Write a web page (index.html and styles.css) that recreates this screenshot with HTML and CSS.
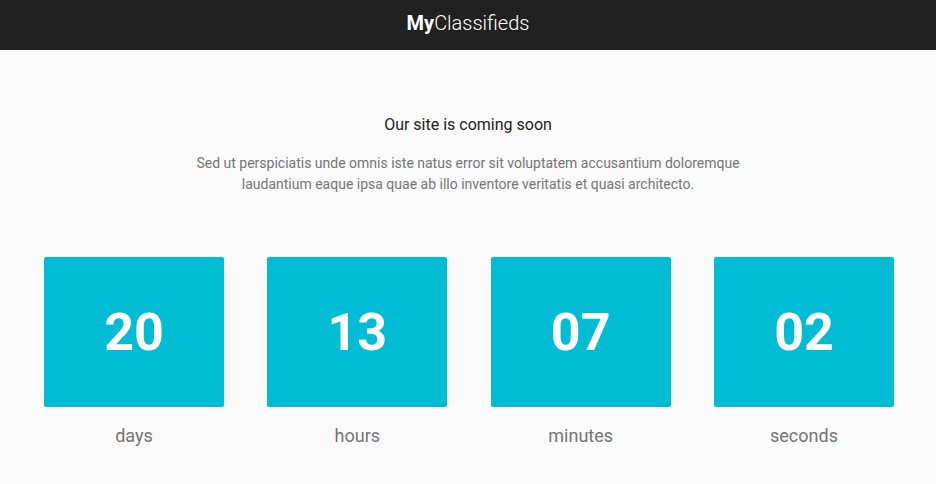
FILE: index.html
```html
<!DOCTYPE html>
<html lang="en">
<head>
<meta charset="utf-8">
<title>MyClassifieds</title>
<link rel="stylesheet" href="styles.css">
</head>
<body>
<header class="navbar">
  <div class="brand"><b>My</b>Classifieds</div>
</header>
<main class="main">
  <h1 class="title">Our site is coming soon</h1>
  <p class="lead">Sed ut perspiciatis unde omnis iste natus error sit voluptatem accusantium doloremque<br>laudantium eaque ipsa quae ab illo inventore veritatis et quasi architecto.</p>
  <div class="countdown">
    <div class="unit"><div class="box">20</div><div class="label">days</div></div>
    <div class="unit"><div class="box">13</div><div class="label">hours</div></div>
    <div class="unit"><div class="box">07</div><div class="label">minutes</div></div>
    <div class="unit"><div class="box">02</div><div class="label">seconds</div></div>
  </div>
</main>
</body>
</html>
```
FILE: styles.css
```css
* { box-sizing: border-box; }
html, body { margin: 0; padding: 0; }
body {
  background: #fafafa;
  font-family: Roboto, "Liberation Sans", sans-serif;
  color: #212121;
}
.navbar {
  height: 50px;
  background: #212121;
  display: flex;
  align-items: center;
  justify-content: center;
}
.brand {
  color: #fff;
  font-size: 20px;
  font-weight: 300;
  line-height: 24px;
  margin-top: -4px;
}
.brand b { font-weight: 700; }
.main {
  padding-top: 65px;
  text-align: center;
}
.title {
  margin: 0;
  font-size: 16px;
  font-weight: 400;
  line-height: 20px;
  color: #212121;
}
.lead {
  margin: 18px 0 0;
  font-size: 14px;
  line-height: 21px;
  color: #757575;
}
.countdown {
  display: grid;
  grid-template-columns: repeat(4, 180px);
  column-gap: 43.33px;
  justify-content: center;
  padding-left: 2px;
  margin-top: 62px;
}
.box {
  height: 150px;
  background: #00bcd4;
  border-radius: 2px;
  color: #fff;
  font-size: 52px;
  font-weight: 700;
  display: flex;
  align-items: center;
  justify-content: center;
}
.label {
  margin-top: 17px;
  font-size: 18px;
  line-height: 24px;
  color: #757575;
}
```
